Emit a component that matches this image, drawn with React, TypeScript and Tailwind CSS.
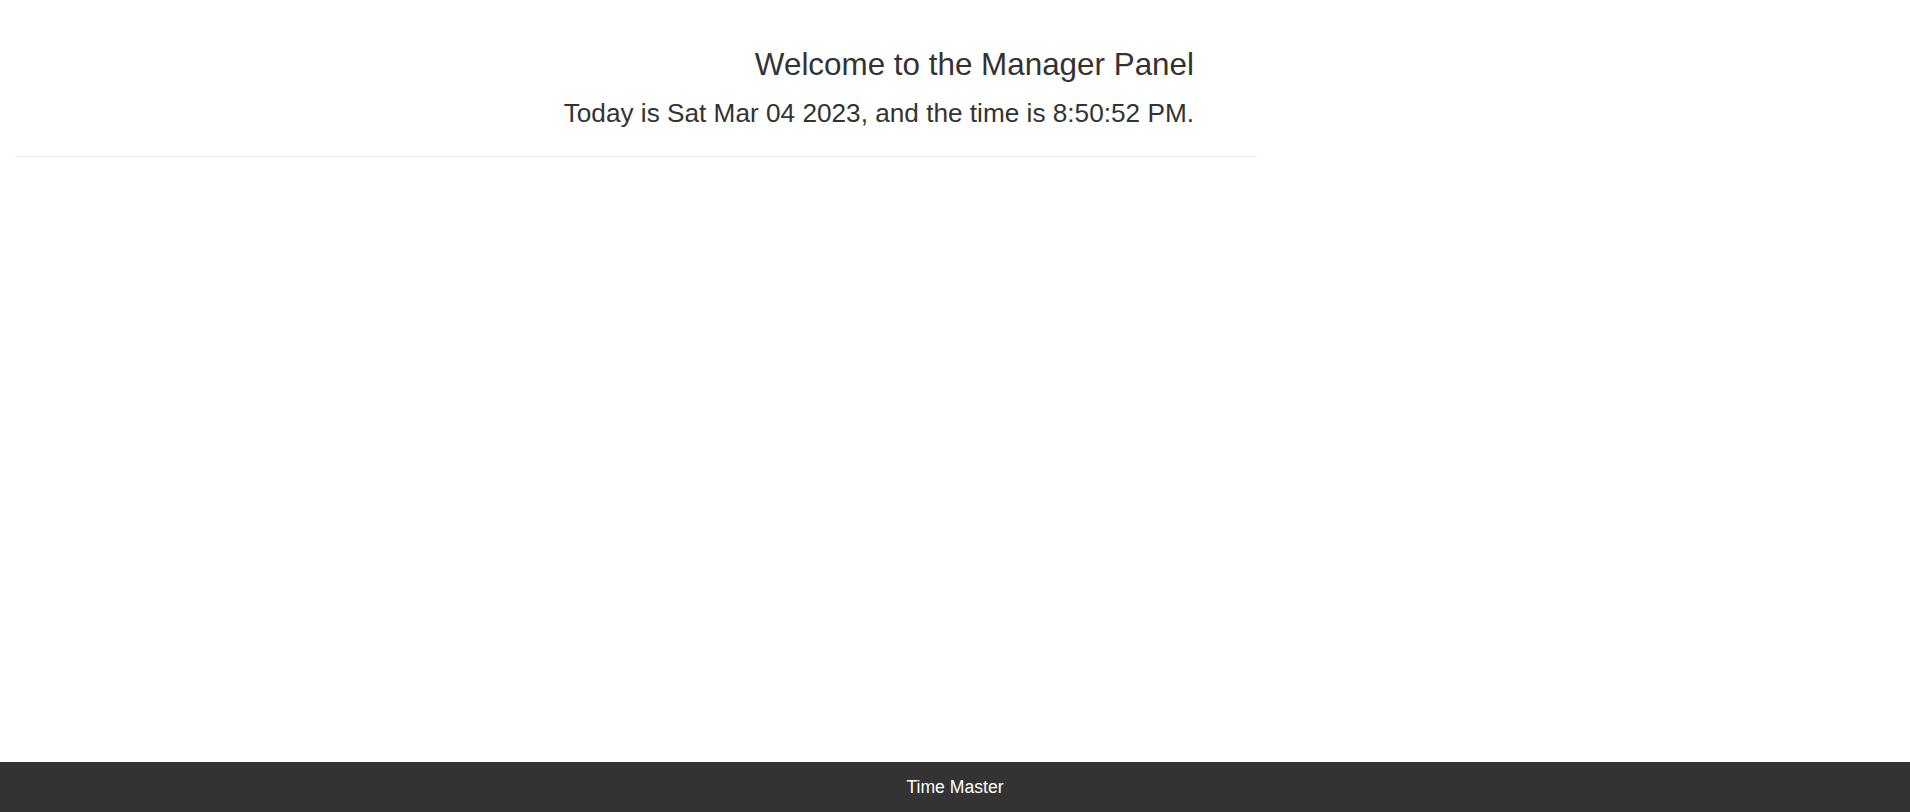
import React from "react";

export default function App() {
  return (
    <div
      className="flex min-h-screen flex-col bg-white text-[#333]"
      style={{ fontFamily: '"Liberation Sans", Arial, sans-serif' }}
    >
      <main className="flex-1">
        <div className="ml-[15px] w-[1242px]">
          <div className="pr-[63px] pt-[48px] text-right">
            <h1 className="text-[31.4px] leading-[33px] font-normal">Welcome to the Manager Panel</h1>
            <p className="mt-[18px] text-[26.2px] leading-[29px]">
              Today is Sat Mar 04 2023, and the time is 8:50:52 PM.
            </p>
          </div>
          <hr className="mt-[28px] border-0 border-t border-[#eeeeee]" />
        </div>
      </main>
      <footer className="flex h-[50px] items-center justify-center bg-[#333333] text-[17.6px] text-white">
        Time Master
      </footer>
    </div>
  );
}
